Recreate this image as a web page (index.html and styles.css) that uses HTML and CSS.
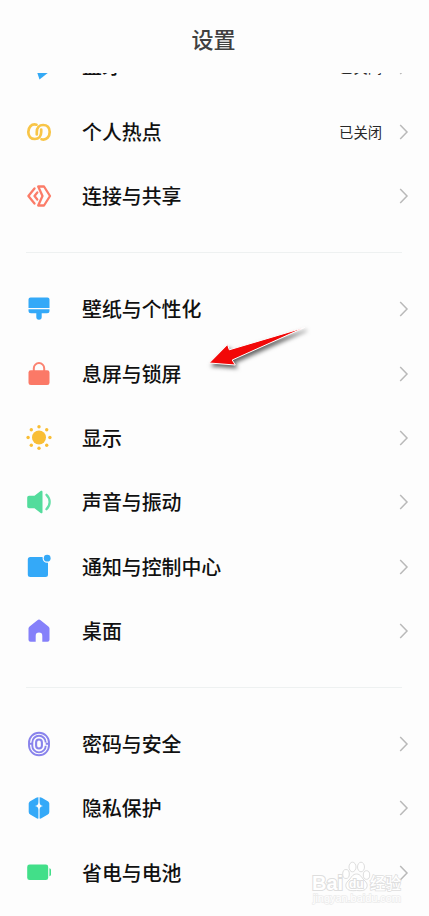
FILE: index.html
```html
<!DOCTYPE html>
<html lang="zh-CN">
<head>
<meta charset="utf-8">
<title>设置</title>
<link rel="stylesheet" href="styles.css">
</head>
<body>
<svg class="defs" width="0" height="0"><symbol id="chevron" viewBox="0 0 10 18"><path d="M1.200 2 8 9 1.200 16" fill="none" stroke="#b9b9b9" stroke-width="1.500"/></symbol></svg>
<div class="screen">
  <header class="header"><h1 class="title">设置</h1></header>
  <main class="list">
    <section class="group group-first">
      <div class="row">
        <svg class="icon" viewBox="0 0 26 26"><path d="M8 4 23 18 13.500 25.500 11 18Z" fill="#34a9f5"/></svg>
        <span class="label label-scrolled">蓝牙</span><span class="value">已关闭</span><svg class="chevron"><use href="#chevron"/></svg>
      </div>
      <div class="row">
        <svg class="icon" viewBox="0 0 26 26" fill="none" stroke="#f8c547" stroke-width="2.700" stroke-linecap="round"><path d="M10.500 5.700C5.200 4.500 2.300 8.500 2.300 13S5 20 8.900 20s6.300-2.900 6.300-7v-2.500"/><path d="M15.500 20.300c5.300 1.200 8.200-2.800 8.200-7.300S21 6 17.100 6s-6.300 2.900-6.300 7v2.500"/></svg>
        <span class="label">个人热点</span><span class="value">已关闭</span><svg class="chevron"><use href="#chevron"/></svg>
      </div>
      <div class="row">
        <svg class="icon" viewBox="0 0 26 26" fill="none" stroke="#fb7c68" stroke-width="2.300" stroke-linecap="round" stroke-linejoin="round"><path d="M8.500 5.500 2.400 13l6.100 7.500M11.300 9.500 8.500 13l2.800 3.500"/><path d="M12.200 3.500H18L24 13l-6 9.500h-5.800l4.300-9.500Z"/></svg>
        <span class="label">连接与共享</span><svg class="chevron"><use href="#chevron"/></svg>
      </div>
    </section>
    <hr class="divider">
    <section class="group">
      <div class="row">
        <svg class="icon" viewBox="0 0 26 26" fill="#34a9f8"><path d="M4.500 1.500h17a2 2 0 0 1 2 2V12h-21V3.500a2 2 0 0 1 2-2ZM2.500 13.300h21v1.400a2.500 2.500 0 0 1-2.500 2.500h-5.300V21a2.700 2.700 0 0 1-5.400 0v-3.800H5a2.500 2.500 0 0 1-2.500-2.500Z"/></svg>
        <span class="label">壁纸与个性化</span><svg class="chevron"><use href="#chevron"/></svg>
      </div>
      <div class="row">
        <svg class="icon" viewBox="0 0 26 26"><path d="M7.800 11V7.300a5.200 5.200 0 0 1 10.400 0V11" fill="none" stroke="#fb8371" stroke-width="2"/><rect x="2.500" y="9.300" width="21" height="14.700" rx="2.300" fill="#fb7967"/></svg>
        <span class="label">息屏与锁屏</span><svg class="chevron"><use href="#chevron"/></svg>
      </div>
      <div class="row">
        <svg class="icon" viewBox="0 0 26 26" fill="#f9be35"><circle cx="13" cy="12.500" r="7"/><circle cx="13" cy="1.700" r="1.700"/><circle cx="20.700" cy="4.800" r="1.700"/><circle cx="23.900" cy="12.500" r="1.700"/><circle cx="20.700" cy="20.200" r="1.700"/><circle cx="13" cy="23.300" r="1.700"/><circle cx="5.300" cy="20.200" r="1.700"/><circle cx="2.100" cy="12.500" r="1.700"/><circle cx="5.300" cy="4.800" r="1.700"/></svg>
        <span class="label">显示</span><svg class="chevron"><use href="#chevron"/></svg>
      </div>
      <div class="row">
        <svg class="icon" viewBox="0 0 26 26"><path d="M3 6.800h5.500L14.600 2c1-.7 1.900-.3 1.900.8v20.400c0 1.100-.9 1.500-1.900.8L8.500 19.200H3A1.800 1.800 0 0 1 1.200 17.400V8.600A1.800 1.800 0 0 1 3 6.800Z" fill="#53dc9c"/><path d="M20.500 5.800c4.200 4 4.200 10.400 0 14.400" fill="none" stroke="#65dfa7" stroke-width="2.300" stroke-linecap="round"/></svg>
        <span class="label">声音与振动</span><svg class="chevron"><use href="#chevron"/></svg>
      </div>
      <div class="row">
        <svg class="icon" viewBox="0 0 26 26" fill="#34a9f8"><path d="M4.300 3h12.300v1.300a4.500 4.500 0 0 0 4.500 4.500h.9V20.500a2.500 2.500 0 0 1-2.500 2.500H4.300A2.500 2.500 0 0 1 1.800 20.500V5.500A2.500 2.500 0 0 1 4.300 3Z"/><circle cx="21.200" cy="4.200" r="3.400"/></svg>
        <span class="label">通知与控制中心</span><svg class="chevron"><use href="#chevron"/></svg>
      </div>
      <div class="row">
        <svg class="icon" viewBox="0 0 26 26"><path d="M11.400 2.200a2.700 2.700 0 0 1 3.200 0l7.800 6.200c.7.600 1.100 1.300 1.100 2.200v11.100a2 2 0 0 1-2 2h-5.200v-5.800a3.300 3.300 0 0 0-6.600 0v5.800H4.500a2 2 0 0 1-2-2V10.600c0-.9.400-1.600 1.100-2.200Z" fill="#8580fa"/></svg>
        <span class="label">桌面</span><svg class="chevron"><use href="#chevron"/></svg>
      </div>
    </section>
    <hr class="divider">
    <section class="group">
      <div class="row">
        <svg class="icon" viewBox="0 0 26 26" fill="none" stroke="#8983ec" stroke-width="1.900"><rect x="3" y="1.700" width="20" height="22.600" rx="10"/><path d="M6.300 15V11.500a6.700 6.700 0 0 1 13.400 0M19.700 14.700a6.700 6.700 0 0 1-13.400 0M19.700 12.700H23M3 12.700h3.300"/><rect x="10.100" y="8.500" width="5.800" height="9" rx="2.900" stroke-width="2.100"/></svg>
        <span class="label">密码与安全</span><svg class="chevron"><use href="#chevron"/></svg>
      </div>
      <div class="row">
        <svg class="icon" viewBox="0 0 26 26" fill="#34a9f8"><path d="M12.400 2.300v4.600c0 2.500-.9 3.500-3.400 4 2.500.5 3.400 1.500 3.400 4v8.700c-.8.100-1.500-.1-2.200-.5l-6-3.500A3 3 0 0 1 2.700 17V8.800c0-1 .5-2 1.500-2.600l6-3.400c.7-.4 1.400-.6 2.200-.5ZM13.600 2.300v4.600c0 2.500.9 3.500 3.400 4-2.500.5-3.400 1.500-3.400 4v8.700c.8.100 1.500-.1 2.200-.5l6-3.500a3 3 0 0 0 1.500-2.600V8.800c0-1-.5-2-1.500-2.600l-6-3.400c-.7-.4-1.400-.6-2.200-.5Z"/></svg>
        <span class="label">隐私保护</span><svg class="chevron"><use href="#chevron"/></svg>
      </div>
      <div class="row">
        <svg class="icon" viewBox="0 0 26 26" fill="#42df89"><rect x="1.200" y="4.500" width="21" height="15.600" rx="2.400"/><path d="M23.400 8.300c1.200.4 1.600 1 1.600 2v4c0 1-.4 1.600-1.600 2Z"/></svg>
        <span class="label">省电与电池</span><svg class="chevron"><use href="#chevron"/></svg>
      </div>
    </section>
  </main>
  <svg class="pointer" viewBox="0 0 115 55"><path d="M9.300 38 27.500 19.600 29.300 24.800 104.500 2.500 32.200 35 35.300 40Z" fill="#f20808" stroke="#fff" stroke-width="1"/></svg>
  <div class="watermark">
    <svg viewBox="0 0 100 52" fill="#fff" stroke="#dedede" stroke-width="1">
      <text class="mark-name" x="3" y="33" textLength="31">Bai</text>
      <ellipse cx="37" cy="17" rx="3.300" ry="4.500"/><ellipse cx="43.500" cy="10" rx="3.500" ry="4.800"/><ellipse cx="52" cy="10" rx="3.500" ry="4.800"/><ellipse cx="57.500" cy="18" rx="3.200" ry="4.300"/>
      <path d="M47.500 17c4 0 5 3.500 7.500 6 3 2.800 4 5 2.500 8-1.500 2.800-5 3-10 2.500-5 .5-8.500.300-10-2.500-1.500-3-.5-5.200 2.500-8 2.500-2.500 3.500-6 7.500-6Z"/>
      <text class="mark-du" x="40" y="31">du</text>
      <text class="mark-cn" x="61" y="32">经验</text>
      <text class="mark-url" x="4" y="45" textLength="88">jingyan.baidu.com</text>
    </svg>
  </div>
</div>
</body>
</html>
```
FILE: styles.css
```css
* { box-sizing: border-box; }
body {
  margin: 0;
  background: #fdfdfd;
  color: #111;
  font-family: "Noto Sans CJK SC", sans-serif;
}
.defs { position: absolute; }
.screen {
  position: relative;
  display: flex;
  flex-direction: column;
  width: 429px;
  height: 916px;
  overflow: hidden;
}
.header {
  flex: none;
  display: flex;
  justify-content: center;
  height: 73px;
  padding: 22px 2px 0 0;
}
.title {
  margin: 0;
  font-size: 22px;
  line-height: 32px;
  font-weight: 500;
  color: #404040;
}
.list { flex: 1; overflow: hidden; }
.group-first { margin-top: -37.700px; }
.row {
  display: flex;
  align-items: center;
  height: 64.300px;
  padding: 0 20px 0 26px;
}
.icon { flex: none; width: 26px; height: 26px; }
.label {
  flex: 1;
  margin-left: 30px;
  font-size: 19.900px;
  line-height: 28px;
  font-weight: 500;
  white-space: nowrap;
}
.label-scrolled { padding-bottom: 2px; }
.value { margin-right: 1px; font-size: 14.300px; line-height: 20px; color: #282828; }
.chevron { flex: none; width: 10px; height: 18px; margin-left: 16px; }
.divider {
  height: 1px;
  margin: 24px 27px 24px 26px;
  border: 0;
  background: #eef1f1;
}
.pointer {
  position: absolute;
  left: 200px;
  top: 325px;
  width: 115px;
  height: 55px;
  filter: drop-shadow(2px 3px 2px rgba(0, 0, 0, .6));
}
.watermark {
  position: absolute;
  left: 309px;
  top: 857px;
  width: 100px;
  height: 52px;
}
.watermark svg { display: block; width: 100px; height: 52px; }
.watermark text { paint-order: stroke; }
.mark-name { font: bold 20px "Liberation Sans", sans-serif; stroke-width: 2px; }
.mark-du { font: bold 12px "Liberation Sans", sans-serif; stroke-width: 2px; }
.mark-cn { font: 500 15.500px "Noto Sans CJK SC", sans-serif; stroke-width: 1.500px; }
.mark-url { font: 11px "Liberation Sans", sans-serif; stroke: #ececec; stroke-width: 1.500px; }
```
